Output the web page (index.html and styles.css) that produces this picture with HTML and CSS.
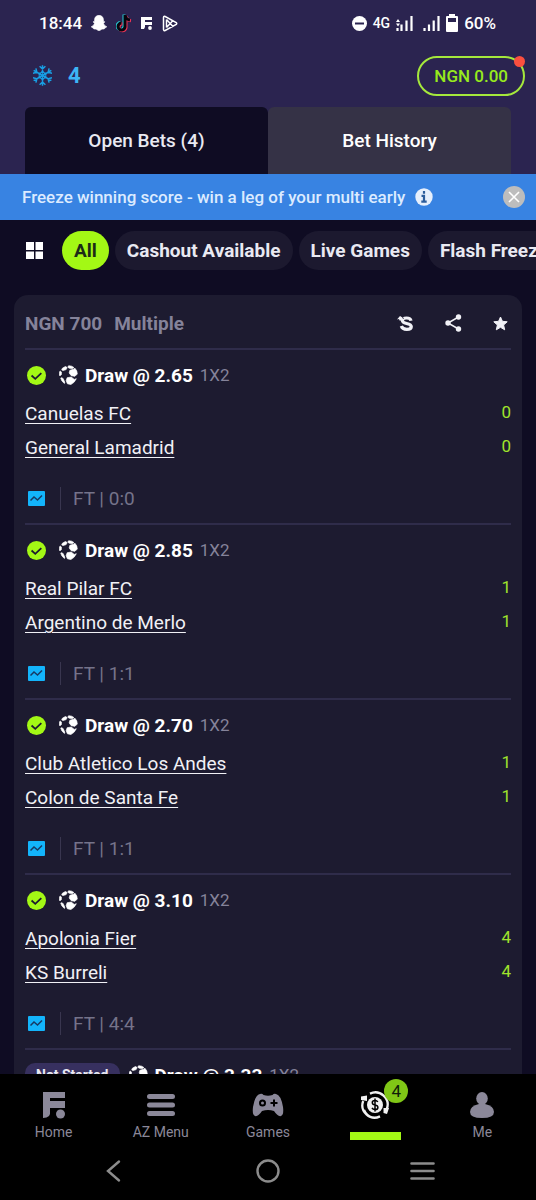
FILE: index.html
```html
<!DOCTYPE html>
<html lang="en">
<head>
<meta charset="utf-8">
<meta name="viewport" content="width=device-width, initial-scale=1">
<title>Open Bets</title>
<link rel="stylesheet" href="styles.css">
</head>
<body>
<svg class="sprite" aria-hidden="true">
  <symbol id="check" viewBox="0 0 20 20"><circle cx="10" cy="10" r="10" fill="#a3f815"/><path d="M4.800 10l3.900 3.500 6.400-6" fill="none" stroke="#1d1b30" stroke-width="1.900"/></symbol>
  <symbol id="ball" viewBox="0 0 56 58"><g fill="#fff" stroke="#fff" stroke-width="2" stroke-linejoin="round"><path d="M10 9l9-5 5 3-3 6-9 3-4-2z"/><path d="M28 2q9-1 16 5l-4 3-10-1-4-3z"/><path d="M32 15l11-3 4-3q7 7 7 17l-7 7-11-2-6-8z"/><path d="M24 37l12-2 9 7 6-2q-5 12-16 17l-10-2-4-9z"/><path d="M3 17l4 3 0 8-4 3-2-1q-1-6 2-13z"/><path d="M6 37l6 2 5 11-1 4Q7 48 5 38z"/></g></symbol>
  <symbol id="chart" viewBox="0 0 17 15"><rect width="17" height="15" rx="1" fill="#13b4fb"/><path d="M2.500 9.500l3.500-3.500 3.500 3 4.500-4.500" fill="none" stroke="#173a63" stroke-width="1.500"/></symbol>
</svg>

<header class="header">
  <div class="status">
    <div class="status-left">
      <span>18:44</span>
      <svg width="16" height="16" viewBox="0 0 16 16"><path d="M8 .5c-3 0-4.500 2-4.300 4.500v1.200c-.6.300-1.400 0-1.400.7 0 .6 1.200.7 1.200 1.500C3 10 1.700 11.200.5 11.600c-.3.900 1.300 1.100 1.900 1.300l.4 1c1 .100 1.700-.2 2.700.4.800.6 1.500 1.200 2.500 1.200s1.700-.6 2.500-1.200c1-.6 1.700-.3 2.700-.4l.4-1c.6-.2 2.200-.4 1.900-1.300-1.200-.4-2.500-1.600-3-3.200 0-.8 1.200-.9 1.200-1.500 0-.7-.8-.4-1.400-.7V5C12.500 2.500 11 .5 8 .5z" fill="#fff" stroke="#fff" stroke-width=".8"/></svg>
      <svg width="16" height="19" viewBox="0 0 16 19"><g fill="none" stroke-width="3"><path d="M9 1v12a3.500 3.500 0 1 1-3.500-4M9 1.500q1 4 5 4.500" stroke="#26c9d1" transform="translate(-1 -.5)"/><path d="M9 1v12a3.500 3.500 0 1 1-3.500-4M9 1.500q1 4 5 4.500" stroke="#ee3457" transform="translate(1 .8)"/><path d="M9 1v12a3.500 3.500 0 1 1-3.500-4M9 1.500q1 4 5 4.500" stroke="#07060f"/></g></svg>
      <svg width="12" height="13" viewBox="0 0 12 13"><path d="M0 0h11v3H4v2h7v3H4v2l-1 2H0z" fill="#fff"/><circle cx="9" cy="11" r="1.900" fill="#fff"/></svg>
      <svg width="16" height="17" viewBox="0 0 16 17"><path d="M1.500 2.500v12q.2 1.500 1.700 1l11-6q1-1 0-2l-11-6q-1.500-.5-1.700 1zM4.500 4.500l6.500 7M4.500 12.500l6.500-7M4.500 4.500v8" fill="none" stroke="#fff" stroke-width="1.500"/></svg>
    </div>
    <div class="status-right">
      <svg width="15" height="15" viewBox="0 0 15 15"><circle cx="7.500" cy="7.500" r="7.500" fill="#fff"/><path d="M3 7.500h9" stroke="#2b2450" stroke-width="2"/></svg>
      <span class="net">4G</span>
      <svg class="bars" width="17" height="15" viewBox="0 0 17 15"><path d="M5.500 15V8.500M10.500 15V4.500M15.500 15V0M1.500 15v-3" stroke="#fff" stroke-width="2.200"/><path d="M0 6l2-3 2 3zM0 7.500h4l-2 3z" fill="#fff"/></svg>
      <svg class="bars2" width="17" height="15" viewBox="0 0 17 15"><path d="M1.500 15v-3M6 15V8.500M10.700 15V4.500M15.500 15V0" stroke="#fff" stroke-width="2.200"/></svg>
      <svg width="12" height="18" viewBox="0 0 12 18"><path d="M3 0h6v2h2q1 0 1 1v14q0 1-1 1H1q-1 0-1-1V3q0-1 1-1h2z" fill="#fff"/><path d="M2 4h8v4H2z" fill="#2b2450"/></svg>
      <span>60%</span>
    </div>
  </div>
  <div class="account">
    <div class="freeze">
      <svg width="19" height="21" viewBox="0 0 19 21"><defs><path id="arm" d="M0 0v-10.200M-2.900-9.300L0-6.500l2.900-2.800M-1.500-3.600L0-2.500l1.500-1.100"/></defs><g fill="none" stroke="#189fe4" stroke-width="1.500" transform="translate(9.500 10.500)"><use href="#arm"/><use href="#arm" transform="rotate(60)"/><use href="#arm" transform="rotate(120)"/><use href="#arm" transform="rotate(180)"/><use href="#arm" transform="rotate(240)"/><use href="#arm" transform="rotate(300)"/></g></svg>
      <span>4</span>
    </div>
    <button class="balance">NGN 0.00<i class="dot"></i></button>
  </div>
  <nav class="tabs">
    <button class="tab active">Open Bets (4)</button>
    <button class="tab">Bet History</button>
  </nav>
</header>

<div class="banner">
  <span>Freeze winning score - win a leg of your multi early</span>
  <svg class="info" width="18" height="18" viewBox="0 0 18 18"><circle cx="9" cy="9" r="8.700" fill="#e6effc"/><path d="M9 3v2.800M6.500 7.800H9v5.500M6.300 13.700h5.400" fill="none" stroke="#2c5d9c" stroke-width="2.200"/></svg>
  <button class="close" aria-label="Close"><svg width="22" height="22" viewBox="0 0 22 22"><circle cx="11" cy="11" r="11" fill="#bdbdbd"/><path d="M6 6l10 10M16 6L6 16" stroke="#fff" stroke-width="1.600"/></svg></button>
</div>

<div class="filters">
  <button class="grid" aria-label="Layout"><svg width="17" height="17" viewBox="0 0 17 17"><path d="M0 0h8v8H0zM9.500 0h7.500v8H9.500zM0 9.500h8V17H0zM9.500 9.500H17V17H9.500z" fill="#fff"/></svg></button>
  <button class="chip on">All</button>
  <button class="chip">Cashout Available</button>
  <button class="chip">Live Games</button>
  <button class="chip">Flash Freeze</button>
</div>

<main class="content">
  <article class="card">
    <div class="card-head">
      <span>NGN 700</span><span>Multiple</span>
      <div class="actions">
        <button aria-label="Swap"><svg width="17" height="17" viewBox="0 0 17 17"><path d="M14 5.800Q13.500 3 9.500 3 5.500 3 5.300 5.300q0 2.200 4.300 3.200 4.700 1 4.700 3.200 0 2.600-4.500 2.600T4.300 11" fill="none" stroke="#f1f1f6" stroke-width="3.200"/><path d="M0 4.500L3 1l2.500 1.500-1 3H2.500L2 4z" fill="#f1f1f6"/><path d="M4.500 0l2 4" stroke="#1d1b30" stroke-width=".8"/></svg></button>
        <button aria-label="Share"><svg width="17" height="18" viewBox="0 0 17 18"><path d="M13.500 3L3 9l10.500 6" fill="none" stroke="#f1f1f6" stroke-width="1.500"/><g fill="#f1f1f6"><circle cx="13.500" cy="3" r="2.700"/><circle cx="3" cy="9" r="2.700"/><circle cx="13.500" cy="15" r="2.700"/></g></svg></button>
        <button aria-label="Favourite"><svg width="15" height="15" viewBox="0 0 15 15"><path d="M7.500 1l1.900 4.300 4.800.5-3.600 3.200 1.100 4.800-4.200-2.500-4.200 2.500L4.400 9 .8 5.800l4.800-.5z" fill="#f1f1f6" stroke="#f1f1f6" stroke-linejoin="round"/></svg></button>
      </div>
    </div>

    <section class="leg">
      <div class="pick"><svg class="tick"><use href="#check"/></svg><svg class="ball"><use href="#ball"/></svg><b>Draw @ 2.65</b><span class="market">1X2</span></div>
      <div class="match"><div class="teams"><a href="#">Canuelas FC</a><a href="#">General Lamadrid</a></div><div class="scores"><span>0</span><span>0</span></div></div>
      <div class="result"><svg class="chart"><use href="#chart"/></svg><span class="ft">FT | 0:0</span></div>
    </section>
    <section class="leg">
      <div class="pick"><svg class="tick"><use href="#check"/></svg><svg class="ball"><use href="#ball"/></svg><b>Draw @ 2.85</b><span class="market">1X2</span></div>
      <div class="match"><div class="teams"><a href="#">Real Pilar FC</a><a href="#">Argentino de Merlo</a></div><div class="scores"><span>1</span><span>1</span></div></div>
      <div class="result"><svg class="chart"><use href="#chart"/></svg><span class="ft">FT | 1:1</span></div>
    </section>
    <section class="leg">
      <div class="pick"><svg class="tick"><use href="#check"/></svg><svg class="ball"><use href="#ball"/></svg><b>Draw @ 2.70</b><span class="market">1X2</span></div>
      <div class="match"><div class="teams"><a href="#">Club Atletico Los Andes</a><a href="#">Colon de Santa Fe</a></div><div class="scores"><span>1</span><span>1</span></div></div>
      <div class="result"><svg class="chart"><use href="#chart"/></svg><span class="ft">FT | 1:1</span></div>
    </section>
    <section class="leg">
      <div class="pick"><svg class="tick"><use href="#check"/></svg><svg class="ball"><use href="#ball"/></svg><b>Draw @ 3.10</b><span class="market">1X2</span></div>
      <div class="match"><div class="teams"><a href="#">Apolonia Fier</a><a href="#">KS Burreli</a></div><div class="scores"><span>4</span><span>4</span></div></div>
      <div class="result"><svg class="chart"><use href="#chart"/></svg><span class="ft">FT | 4:4</span></div>
    </section>
    <section class="leg">
      <div class="pick"><span class="pending">Not Started</span><svg class="ball"><use href="#ball"/></svg><b>Draw @ 3.33</b><span class="market">1X2</span></div>
    </section>
  </article>
</main>

<nav class="bottom">
  <a class="item" href="#"><svg width="24" height="28" viewBox="0 0 24 28"><path d="M1 1h22v6H8v3h15v7H8v6l-1 2q-2 2-6 2z" fill="#8b8899"/><circle cx="18.500" cy="23" r="4.500" fill="#8b8899"/></svg><span>Home</span></a>
  <a class="item" href="#"><svg width="28" height="28" viewBox="0 0 28 28"><path d="M2.500 5.500h23M2.500 14h23M2.500 22.500h23" stroke="#8b8899" stroke-width="5" stroke-linecap="round"/></svg><span>AZ Menu</span></a>
  <a class="item" href="#"><svg width="32" height="28" viewBox="0 0 32 28"><path d="M8 3q2-1 3.500 1 4.500 1.500 9 0 1.500-2 3.500-1 5 1 7 13 1 8-2 9-3 1-7-5-6-2-12 0-4 6-7 5-3-1-2-9Q3 4 8 3z" fill="#8b8899"/><circle cx="10.500" cy="12" r="2.500" fill="none" stroke="#000" stroke-width="2"/><path d="M22 8.500v7M18.500 12h7" stroke="#000" stroke-width="2"/></svg><span>Games</span></a>
  <a class="item current" href="#" aria-label="My bets"><span class="coin"><svg width="28" height="28" viewBox="0 0 28 28"><circle cx="14" cy="14" r="8" fill="#f1f1f1"/><path d="M16.800 11q-.8-1.600-2.800-1.600-2.700 0-2.700 2.100T14 13.900q2.900.4 2.900 2.500T14 18.600q-2.200 0-3-1.700M14 7.500v13" fill="none" stroke="#000" stroke-width="1.500"/><path d="M9 2.600A12.300 12.300 0 0 1 25.800 18M19 25.400A12.300 12.300 0 0 1 2.200 10M3 19q2.500 6 8.500 7.500" fill="none" stroke="#f1f1f1" stroke-width="2.300"/><path d="M22.500 17h5.500l-2 6-3.500-1zM0 9V5.500l6-1V10z" fill="#f1f1f1"/></svg><em class="badge">4</em></span><i class="mark"></i></a>
  <a class="item" href="#"><svg width="26" height="28" viewBox="0 0 26 28"><ellipse cx="13" cy="7.500" rx="5.800" ry="6.500" fill="#8b8899"/><path d="M10 13h6q9 2 9 8t-12 6q-12 0-12-6t9-8z" fill="#8b8899"/></svg><span>Me</span></a>
</nav>

<div class="system">
  <button aria-label="Back"><svg width="16" height="24" viewBox="0 0 16 24"><path d="M14 2.500L3 12l11 9.500" fill="none" stroke="#8c8c8c" stroke-width="2.400" stroke-linecap="round"/></svg></button>
  <button aria-label="Home screen"><svg width="24" height="24" viewBox="0 0 24 24"><circle cx="12" cy="12" r="10.500" fill="none" stroke="#8c8c8c" stroke-width="2.400"/></svg></button>
  <button aria-label="Recent apps"><svg width="25" height="24" viewBox="0 0 25 24"><path d="M1.500 4.500h22M1.500 12h22M1.500 19.500h22" stroke="#8c8c8c" stroke-width="2.600" stroke-linecap="round"/></svg></button>
</div>
</body>
</html>
```
FILE: styles.css
```css
* { box-sizing: border-box; }
body {
  margin: 0;
  height: 100vh;
  display: flex;
  flex-direction: column;
  overflow: hidden;
  background: #0f0c23;
  color: #f1f1f6;
  font-family: Roboto, "Liberation Sans", sans-serif;
  font-size: 19px;
}
button {
  margin: 0;
  padding: 0;
  border: 0;
  background: none;
  color: inherit;
  font: inherit;
  display: flex;
  align-items: center;
  justify-content: center;
}
a { color: inherit; text-decoration: none; }
svg { display: block; flex: none; }
.sprite { position: absolute; width: 0; height: 0; }

.header { background: #2b2450; flex: none; }
.status {
  height: 46px;
  padding: 0 40px 0 39px;
  display: flex;
  justify-content: space-between;
  align-items: center;
  font-size: 17px;
  font-weight: 500;
  color: #fff;
}
.status-left, .status-right { display: flex; align-items: center; }
.status-left { gap: 9px; }
.status-right { gap: 6px; }
.net { font-size: 14px; }
.bars2 { margin-left: 4px; }
.account {
  height: 61px;
  padding: 10px 11px 12px 33px;
  display: flex;
  justify-content: space-between;
  align-items: center;
}
.freeze {
  display: flex;
  align-items: center;
  gap: 16px;
  color: #3db5f5;
  font-size: 22px;
  font-weight: 700;
}
.balance {
  position: relative;
  height: 40px;
  padding: 0 15px;
  border: 2px solid #a5e83c;
  border-radius: 20px;
  color: #97ea1d;
  font-size: 17px;
  font-weight: 500;
}
.dot {
  position: absolute;
  top: -2px;
  right: -2px;
  width: 11px;
  height: 11px;
  border-radius: 50%;
  background: #fb4f3f;
}
.tabs {
  display: grid;
  grid-template-columns: 1fr 1fr;
  padding: 0 25px;
}
.tab {
  height: 67px;
  border-radius: 6px 6px 0 0;
  background: #353246;
  color: #fff;
  font-weight: 500;
}
.tab.active { background: #0f0c23; color: #e9e9f2; }

.banner {
  flex: none;
  height: 46px;
  padding: 0 11px 0 22px;
  display: flex;
  align-items: center;
  gap: 10px;
  background: #3883e2;
  color: #dcebff;
  font-size: 17px;
  font-weight: 500;
}
.close { margin-left: auto; }

.filters {
  flex: none;
  padding: 11px 0 25px 26px;
  display: flex;
  gap: 6px;
  overflow: hidden;
  white-space: nowrap;
}
.grid { margin-right: 13px; flex: none; }
.chip {
  flex: none;
  height: 39px;
  padding: 0 12px;
  border-radius: 20px;
  background: #1c192f;
  color: #e9e9f2;
  font-weight: 700;
}
.chip.on { background: #a3f815; color: #1c2b17; }

.content {
  flex: 1;
  min-height: 0;
  overflow: hidden;
  padding: 0 14px;
}
.card {
  padding: 0 11px;
  border-radius: 14px;
  background: #1d1b30;
}
.card-head {
  height: 53px;
  padding-top: 3px;
  display: flex;
  align-items: center;
  gap: 12px;
  color: #85839a;
  font-weight: 700;
}
.actions {
  margin-left: auto;
  display: flex;
  align-items: center;
  gap: 31px;
  padding-right: 3px;
}
.leg {
  border-top: 2px solid #2f2c4a;
  padding: 12px 0;
}
.pick { height: 26px; display: flex; align-items: center; color: #fff; }
.tick { width: 19px; height: 19px; margin: 0 13px 0 2px; }
.ball { width: 19px; height: 20px; margin-right: 7px; }
.market { margin-left: 7px; color: #85839a; font-size: 17px; }
.pending {
  height: 24px;
  padding: 0 11px;
  margin-right: 9px;
  border-radius: 10px;
  background: #37305f;
  color: #e9e9f2;
  font-size: 14px;
  font-weight: 700;
  line-height: 24px;
}
.match {
  display: flex;
  justify-content: space-between;
  margin: 9px 0 20px;
  line-height: 34px;
}
.teams, .scores { display: flex; flex-direction: column; }
.teams { align-items: flex-start; }
.teams a { text-decoration: underline; text-decoration-thickness: 1px; text-underline-offset: 3px; }
.scores { margin-top: -2px; color: #a0e42c; font-size: 17px; }
.result { height: 26px; display: flex; align-items: center; gap: 15px; color: #75738a; }
.chart { width: 17px; height: 15px; margin-left: 3px; }
.ft { border-left: 1px solid #39364f; padding-left: 12px; }

.bottom {
  flex: none;
  height: 67px;
  display: grid;
  grid-template-columns: repeat(5, 1fr);
  background: #000;
  color: #8b8899;
  font-size: 14px;
}
.item {
  display: flex;
  flex-direction: column;
  align-items: center;
  padding-top: 17px;
  gap: 5px;
}
.coin { position: relative; }
.badge {
  position: absolute;
  left: 23px;
  top: -12px;
  width: 24px;
  height: 24px;
  border-radius: 50%;
  background: #80c716;
  color: #101c08;
  font-size: 17px;
  font-style: normal;
  line-height: 24px;
  text-align: center;
}
.mark { width: 51px; height: 8px; margin-top: 8px; background: #a3f815; }
.system {
  flex: none;
  height: 59px;
  padding: 0 36px;
  display: grid;
  grid-template-columns: repeat(3, 1fr);
  background: #000;
}
```
